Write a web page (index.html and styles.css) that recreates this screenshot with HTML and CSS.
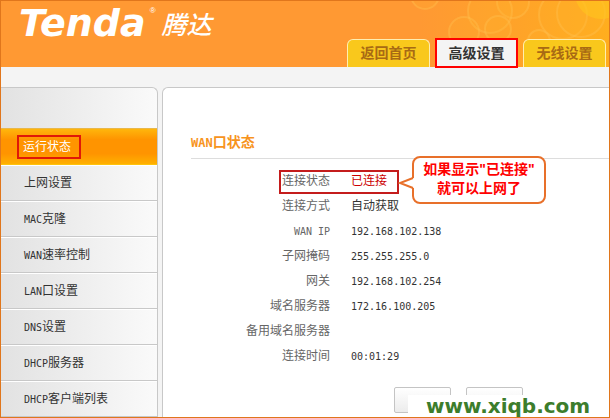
FILE: index.html
```html
<!DOCTYPE html>
<html lang="zh-CN">
<head>
    <meta charset="UTF-8">
    <meta name="viewport" content="width=device-width, initial-scale=1.0">
    <title>Tenda 腾达</title>
    <link rel="stylesheet" href="styles.css">
</head>
<body>
    <div class="page">
        <header class="header">
            <svg class="pattern" width="270" height="66" viewBox="0 0 270 66" aria-hidden="true">
                <defs>
                    <linearGradient id="glow">
                        <stop offset="0.3" stop-color="#ffab20" stop-opacity="0"/>
                        <stop offset="1" stop-color="#ffae1e"/>
                    </linearGradient>
                </defs>
                <rect width="270" height="66" fill="url(#glow)"/>
                <g fill="#ffb62c" fill-opacity=".2" stroke="#ffc050" stroke-opacity=".4" stroke-width="2">
                    <circle cx="86" cy="-6" r="14"/>
                    <circle cx="174" cy="1" r="16"/>
                    <circle cx="151" cy="10" r="22"/>
                    <circle cx="125" cy="31" r="15"/>
                    <circle cx="159" cy="28" r="13"/>
                    <circle cx="200" cy="40" r="11"/>
                    <circle cx="224" cy="14" r="24"/>
                    <circle cx="242" cy="12" r="24"/>
                </g>
                <circle cx="262" cy="-8" r="26" fill="#ffc41e" fill-opacity=".6"/>
            </svg>
            <div class="logo">
                <span class="logo-en">Tenda</span><span class="logo-reg">®</span><span class="logo-cn">腾达</span>
            </div>
            <nav class="tabs">
                <a class="tab" href="#">返回首页</a>
                <a class="tab active" href="#">高级设置</a>
                <a class="tab" href="#">无线设置</a>
            </nav>
        </header>
        <div class="main">
            <nav class="sidebar">
                <a class="item current" href="#"><span class="mark">运行状态</span></a>
                <a class="item" href="#">上网设置</a>
                <a class="item" href="#"><span class="en">MAC</span>克隆</a>
                <a class="item" href="#"><span class="en">WAN</span>速率控制</a>
                <a class="item" href="#"><span class="en">LAN</span>口设置</a>
                <a class="item" href="#"><span class="en">DNS</span>设置</a>
                <a class="item" href="#"><span class="en">DHCP</span>服务器</a>
                <a class="item" href="#"><span class="en">DHCP</span>客户端列表</a>
            </nav>
            <section class="content">
                <h2><span class="en">WAN</span>口状态</h2>
                <dl class="status">
                    <div class="row marked">
                        <dt>连接状态</dt>
                        <dd>
                            已连接
                            <div class="tip">
                                <svg class="tip-arrow" width="16" height="14" viewBox="0 0 16 14" aria-hidden="true">
                                    <path d="M14 2 H16 V12 H14Z" fill="#fff"/>
                                    <path d="M15 2 L2 7 L15 12" fill="#fff" stroke="#e8702a" stroke-width="2"/>
                                </svg>
                                如果显示"已连接"<br>就可以上网了
                            </div>
                        </dd>
                    </div>
                    <div class="row"><dt>连接方式</dt><dd>自动获取</dd></div>
                    <div class="row"><dt class="en">WAN IP</dt><dd class="en">192.168.102.138</dd></div>
                    <div class="row"><dt>子网掩码</dt><dd class="en">255.255.255.0</dd></div>
                    <div class="row"><dt>网关</dt><dd class="en">192.168.102.254</dd></div>
                    <div class="row"><dt>域名服务器</dt><dd class="en">172.16.100.205</dd></div>
                    <div class="row"><dt>备用域名服务器</dt><dd></dd></div>
                    <div class="row"><dt>连接时间</dt><dd class="en">00:01:29</dd></div>
                </dl>
                <div class="buttons">
                    <button type="button" aria-label="释放"></button>
                    <button type="button" aria-label="刷新"></button>
                </div>
            </section>
        </div>
        <div class="watermark">www.xiqb.com</div>
    </div>
</body>
</html>
```
FILE: styles.css
```css
* {
    box-sizing: border-box;
}
body {
    margin: 0;
    font-family: "Liberation Sans", "Noto Sans CJK SC", sans-serif;
    font-size: 12px;
    color: #333;
    background-color: #f4f4f4;
}
a {
    text-decoration: none;
}
.page {
    position: relative;
    display: flex;
    flex-direction: column;
    height: 100vh;
    overflow: hidden;
    border: 1px solid #e0761c;
}
.header {
    position: relative;
    display: flex;
    justify-content: space-between;
    flex: none;
    height: 66px;
    background-color: #ff9933;
}
.pattern {
    position: absolute;
    top: 0;
    right: 0;
}
.logo {
    display: flex;
    padding-left: 18px;
    color: #fff;
}
.logo-en {
    font: italic bold 38px/44px "DejaVu Sans", sans-serif;
}
.logo-reg {
    padding-left: 4px;
    font-size: 8px;
    line-height: 20px;
}
.logo-cn {
    padding-left: 6px;
    font: italic 500 25px/44px "Noto Sans CJK SC", sans-serif;
}
.tabs {
    position: relative;
    display: flex;
    align-items: flex-end;
    gap: 5px;
    padding-right: 3px;
}
.tab {
    width: 83px;
    height: 28px;
    border: 1px solid #ffeeb0;
    border-bottom: 0;
    border-radius: 6px 6px 0 0;
    background-color: #f9c81c;
    color: #a86a14;
    font-size: 14px;
    font-weight: bold;
    line-height: 26px;
    text-align: center;
}
.tab.active {
    height: 30px;
    margin-bottom: -1px;
    border: 2px solid #f00;
    border-radius: 0;
    background-color: #f4f4f4;
    color: #333;
}
.main {
    display: flex;
    flex: 1;
    gap: 4px;
    padding-top: 20px;
    min-height: 0;
}
.sidebar {
    flex: none;
    width: 157px;
    padding-top: 40px;
    border: 1px solid #c8c8c8;
    border-width: 1px 1px 0 0;
    border-radius: 0 6px 0 0;
    background: linear-gradient(to right, #e2e2e2, #fafafa);
}
.item {
    display: block;
    height: 36px;
    padding-left: 23px;
    border-top: 1px solid #fff;
    border-bottom: 1px solid #c8c8c8;
    color: #333;
    line-height: 34px;
    white-space: nowrap;
}
.item.current {
    height: 37px;
    padding-left: 16px;
    border-top-color: #e8b84c;
    border-bottom-color: #ffc20c;
    background: linear-gradient(#ffb60c, #ff9400 30%, #ff9400 70%, #ffb000);
    color: #fff;
    line-height: 36px;
}
.mark {
    display: inline-block;
    width: 64px;
    height: 24px;
    padding-left: 4px;
    border: 2px solid #e01808;
    line-height: 20px;
}
.en {
    font-family: "DejaVu Sans Mono", monospace;
    font-size: 10px;
}
.content {
    flex: 1;
    padding: 42px 0 0 28px;
    border: 1px solid #c8c8c8;
    border-width: 1px 0 0 1px;
    border-radius: 6px 0 0 0;
    background-color: #fff;
}
h2 {
    height: 29px;
    margin: 0 0 10px;
    border-bottom: 1px solid #ddd;
    color: #f7941d;
    font-size: 14px;
    line-height: 24px;
}
h2 .en {
    font-size: 12px;
}
.status {
    margin: 0;
}
.row {
    display: flex;
    height: 25px;
    line-height: 25px;
}
dt {
    width: 139px;
    color: #666;
    text-align: right;
}
dd {
    margin: 0 0 0 21px;
}
.row.marked {
    position: relative;
    width: 208px;
}
.row.marked::before {
    content: "";
    position: absolute;
    inset: 1px 0 0 88px;
    border: 2px solid #c41c1c;
}
.row.marked dd {
    color: #c00;
}
.row .tip {
    position: absolute;
    top: -13px;
    left: 221px;
    width: 134px;
    height: 48px;
    padding-top: 2px;
    border: 2px solid #e8702a;
    border-radius: 8px;
    background-color: #fff;
    color: #f00;
    font-size: 14px;
    font-weight: bold;
    line-height: 19px;
    text-align: center;
    white-space: nowrap;
}
.tip-arrow {
    position: absolute;
    top: 18px;
    left: -16px;
}
.buttons {
    display: flex;
    gap: 15px;
    padding: 18px 0 0 203px;
}
button {
    width: 57px;
    height: 26px;
    border: 1px solid #c4c4c4;
    border-radius: 2px;
    background: linear-gradient(#fff, #ececec);
}
.watermark {
    position: absolute;
    right: -1px;
    bottom: -1px;
    width: 202px;
    height: 23px;
    padding-left: 18px;
    background-color: #fff;
    color: #3c7d2c;
    font: bold 20px/22px "DejaVu Sans", sans-serif;
}
```
